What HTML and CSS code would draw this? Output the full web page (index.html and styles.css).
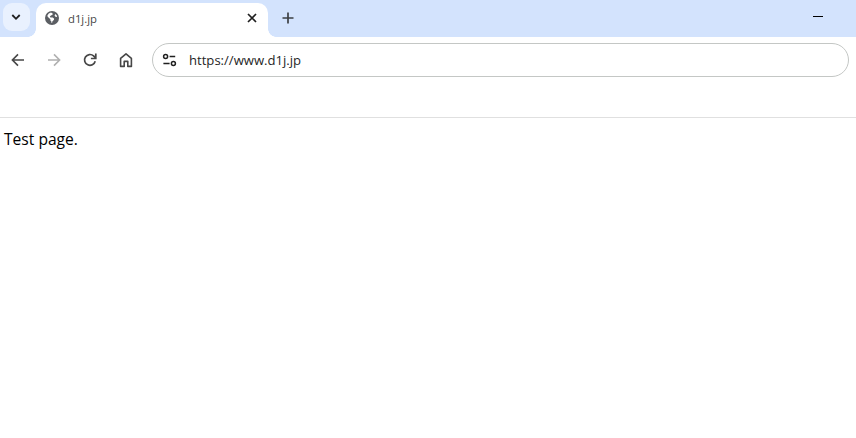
FILE: index.html
```html
<!DOCTYPE html>
<html lang="en">
<head>
<meta charset="utf-8">
<title>d1j.jp</title>
<link rel="stylesheet" href="styles.css">
</head>
<body>
<header class="chrome">
  <div class="tabstrip">
    <div class="tabsearch">
      <svg class="ico" width="12" height="12" viewBox="0 0 12 12"><path d="M2.3 4 6 7.8 9.7 4" fill="none" stroke="#1f1f1f" stroke-width="1.8"/></svg>
    </div>
    <div class="tab">
      <svg class="favicon" width="16" height="16" viewBox="0 0 16 16">
        <circle cx="8" cy="8" r="7" fill="#5b5e63"/>
        <path d="M7 2.6 4.8 3.6 3.4 5.4l.3 1.4 2.7 2.4v1.4l1 1v1.2l.7.1.2-1.4 1.7-1.7V8.6L8.6 7.6H6.4L5.8 6.4l1.4-1.2 1.2-.1.3-1.6ZM11.2 4l-.6 1.4.9 1.4 1.6.2-.3-1.6Z" fill="#fff"/>
      </svg>
      <span class="tab-title">d1j.jp</span>
      <svg class="tab-close" width="10" height="10" viewBox="0 0 10 10"><path d="M1 1l8 8M9 1 1 9" stroke="#1f1f1f" stroke-width="1.7" fill="none"/></svg>
    </div>
    <svg class="newtab" width="12" height="12" viewBox="0 0 12 12"><path d="M6 .5v11M.5 6h11" stroke="#3c4043" stroke-width="1.7" fill="none"/></svg>
    <div class="minimize"></div>
  </div>
  <div class="toolbar">
    <svg class="tool" width="16" height="16" viewBox="0 0 16 16"><path d="M14 8H2.6M8 2.4 2.4 8 8 13.6" fill="none" stroke="#474747" stroke-width="1.6"/></svg>
    <svg class="tool" width="16" height="16" viewBox="0 0 16 16"><path d="M2 8h11.4M8 2.4 13.6 8 8 13.6" fill="none" stroke="#b0b0b0" stroke-width="1.6"/></svg>
    <svg class="tool" width="16" height="16" viewBox="0 0 16 16"><path d="M13.2 9.2A5.4 5.4 0 1 1 11.6 3.9L13.4 5.8" fill="none" stroke="#474747" stroke-width="1.7"/><path d="M13.8 1.6v4.9H8.9" fill="none" stroke="#474747" stroke-width="1.7"/></svg>
    <svg class="tool" width="16" height="16" viewBox="0 0 16 16"><path d="M2.6 14.4V6.4L8 1.8l5.4 4.6v8h-3.6V9.4H6.2v5Z" fill="none" stroke="#474747" stroke-width="1.6" stroke-linejoin="round"/></svg>
    <div class="omnibox">
      <svg class="tune" width="16" height="14" viewBox="0 0 16 14"><circle cx="3.6" cy="3.4" r="2" fill="none" stroke="#1f1f1f" stroke-width="1.5"/><path d="M7.6 3.4h5.6M1.4 10.4h6.2" stroke="#1f1f1f" stroke-width="1.5" fill="none"/><circle cx="11.4" cy="10.4" r="2" fill="none" stroke="#1f1f1f" stroke-width="1.5"/></svg>
      <span class="url">https://www.d1j.jp</span>
    </div>
  </div>
  <div class="infobar"></div>
</header>
<main class="content">Test page.</main>
</body>
</html>
```
FILE: styles.css
```css
* { box-sizing: border-box; }
html, body { margin: 0; padding: 0; background: #fff; height: 100%; overflow: hidden; }
body { font-family: "Open Sans", "Noto Sans", sans-serif; color: #000; }

.chrome { display: flex; flex-direction: column; }

.tabstrip {
  height: 37px;
  background: #d3e3fd;
  display: flex;
  align-items: flex-start;
  padding: 3px 0 0 3px;
}
.tabsearch {
  width: 27px;
  height: 28px;
  border-radius: 9px;
  background: #e9f1fe;
  display: flex;
  align-items: center;
  justify-content: center;
  padding-right: 2px;
  flex: none;
}
.ico { display: block; margin-top: -1px; }

.tab {
  position: relative;
  margin-left: 6px;
  width: 232px;
  height: 34px;
  background: #fff;
  border-radius: 10px 10px 0 0;
  display: flex;
  align-items: center;
  padding: 0 11px 0 8px;
  flex: none;
}
.tab::before, .tab::after {
  content: "";
  position: absolute;
  bottom: 0;
  width: 8px;
  height: 8px;
}
.tab::before { left: -8px; background: radial-gradient(circle at 0 0, transparent 7.5px, #fff 8px); }
.tab::after { right: -8px; background: radial-gradient(circle at 100% 0, transparent 7.5px, #fff 8px); }

.favicon { flex: none; margin-top: -4px; }
.tab-title {
  margin-left: 8px;
  margin-top: -3px;
  font-size: 11.3px;
  line-height: 16px;
  color: #474747;
  flex: 1;
}
.tab-close { flex: none; margin-top: -5px; }

.newtab { flex: none; margin: 9px 0 0 14px; }
.minimize {
  width: 10px;
  height: 1px;
  background: #000;
  margin: 13px 33px 0 auto;
}

.toolbar {
  height: 46px;
  background: #fff;
  display: flex;
  align-items: center;
  padding: 0 7px 0 10px;
  gap: 20px;
}
.tool { flex: none; }
.omnibox {
  margin-left: -2px;
  flex: 1;
  height: 34px;
  border: 1px solid #c4c7c5;
  border-radius: 17px;
  display: flex;
  align-items: center;
  padding-left: 9px;
}
.tune { flex: none; }
.url {
  margin-left: 11px;
  font-size: 13.1px;
  line-height: 18px;
  color: #1f1f1f;
}

.infobar { height: 35px; border-bottom: 1px solid #e0e0e0; }

.content {
  padding: 9px 4px 0;
  font-size: 15.6px;
  line-height: 24px;
  color: #000;
}
```
